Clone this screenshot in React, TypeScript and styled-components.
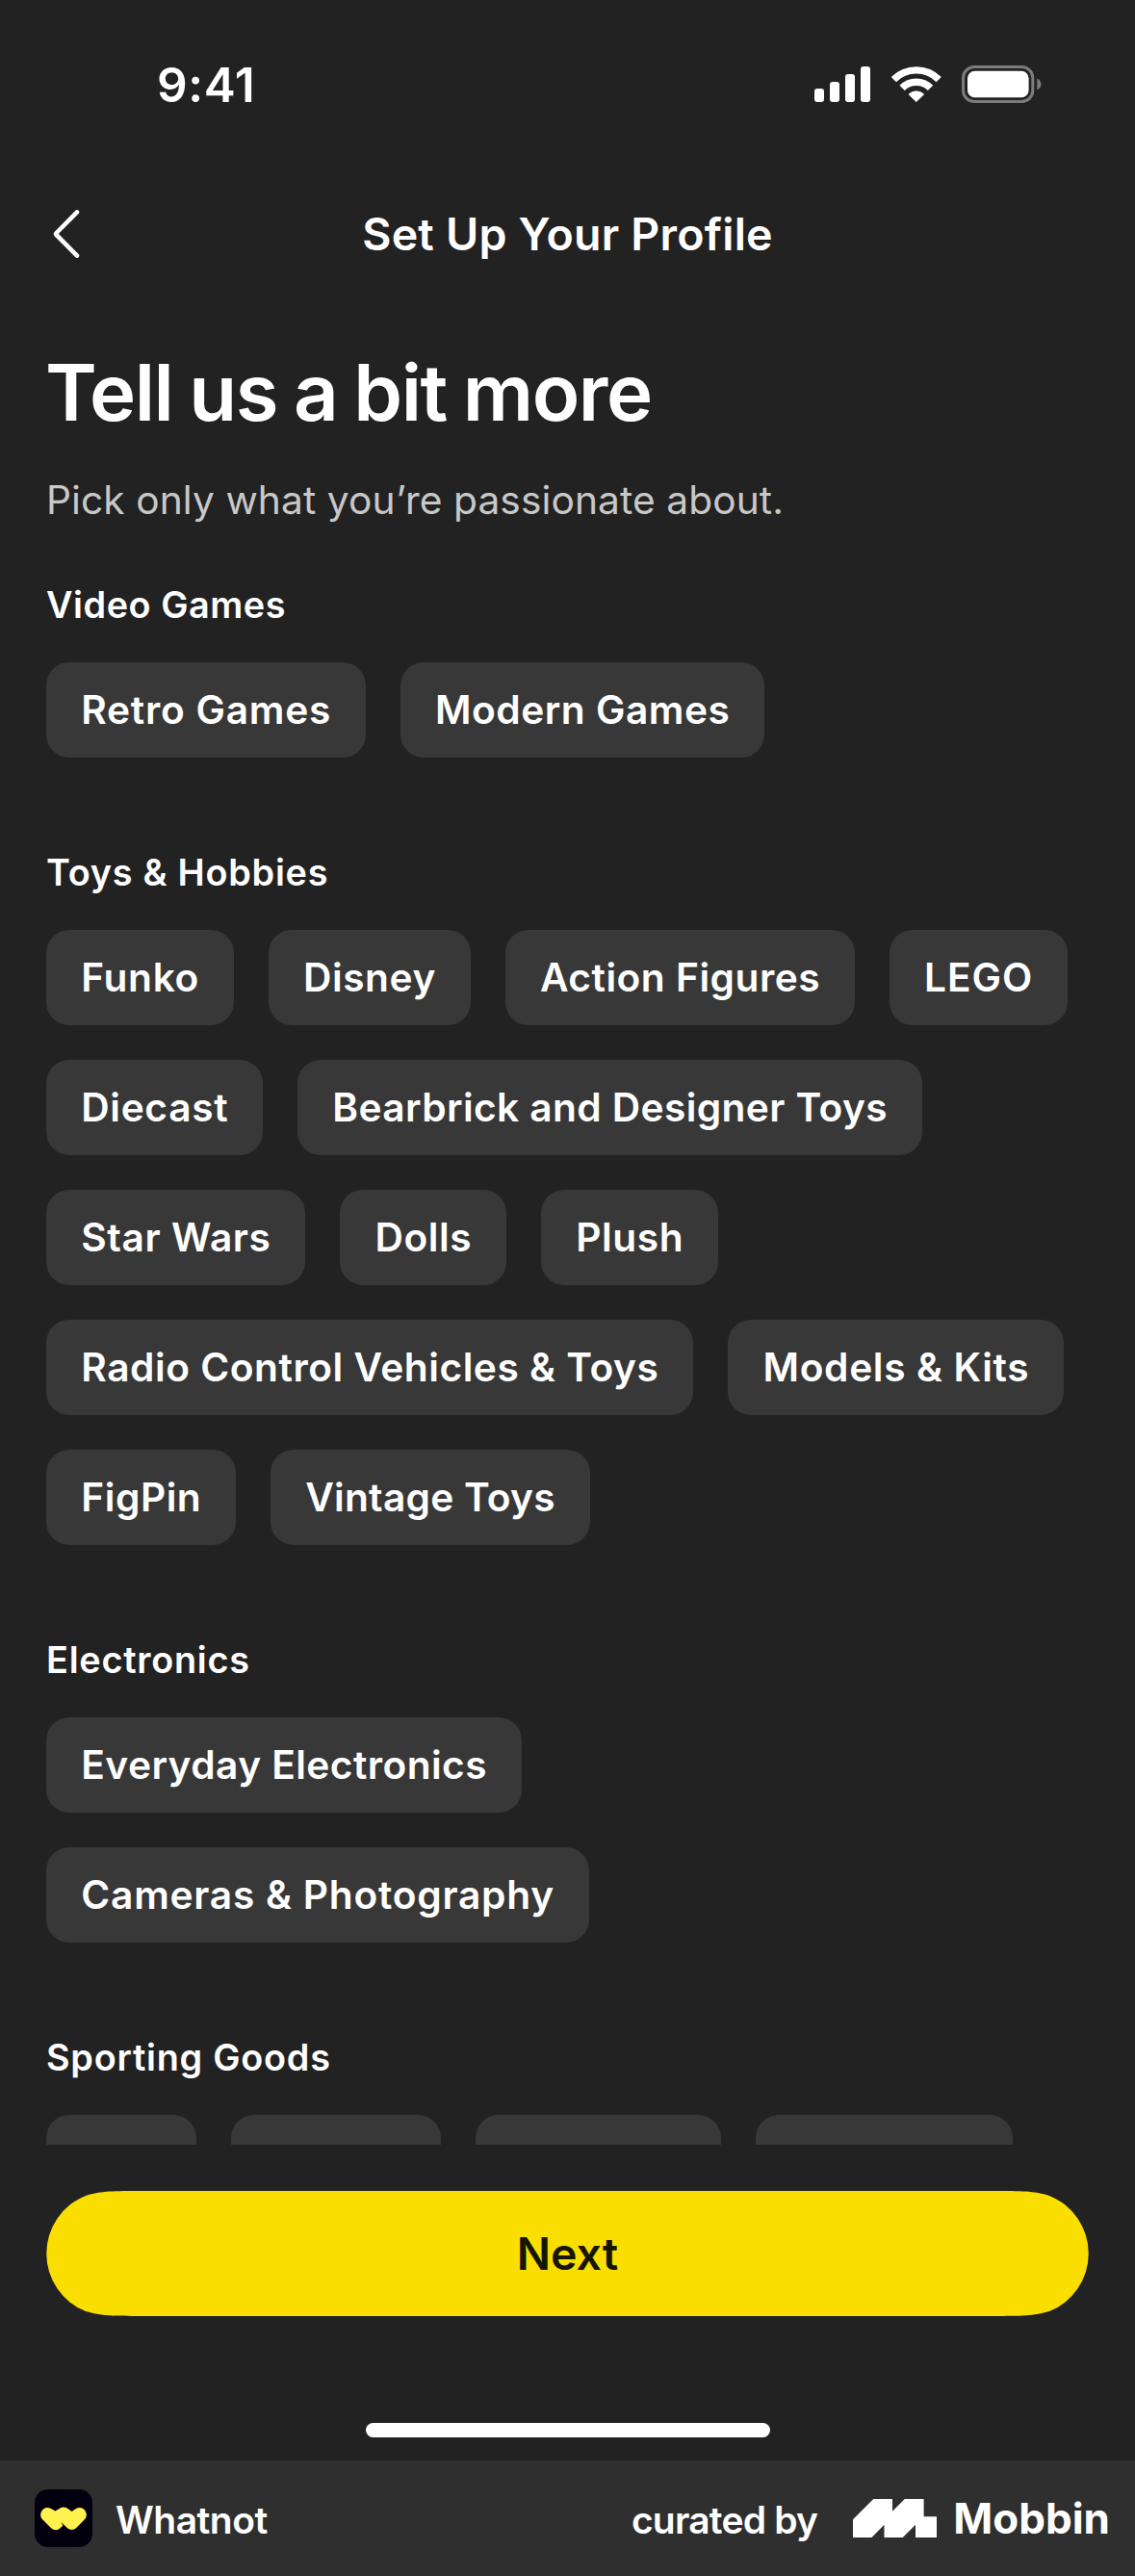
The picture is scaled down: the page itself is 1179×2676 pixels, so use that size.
import React from 'react';
import styled, { createGlobalStyle } from 'styled-components';

const GlobalStyle = createGlobalStyle`
  body {
    margin: 0;
    background: #222222;
  }
  *, *::before, *::after {
    box-sizing: border-box;
  }
`;

const Screen = styled.div`
  display: flex;
  flex-direction: column;
  width: 1179px;
  height: 2676px;
  overflow: hidden;
  background: #222222;
  color: #ffffff;
  font-family: Inter, 'Liberation Sans', sans-serif;
`;

const StatusBar = styled.header`
  display: flex;
  flex: none;
  align-items: center;
  justify-content: space-between;
  height: 177px;
  padding: 0 97px 0 163px;
`;

const Clock = styled.span`
  margin-top: -2px;
  font-size: 49.5px;
  font-weight: 600;
  line-height: 60px;
  letter-spacing: 0.6px;
`;

const StatusIcons = styled.div`
  display: flex;
  align-items: center;
  gap: 21.5px;
  margin-top: -2px;

  svg {
    display: block;
  }
`;

const NavBar = styled.nav`
  display: grid;
  flex: none;
  grid-template-columns: 132px 1fr 132px;
  align-items: center;
  height: 132px;
`;

const BackButton = styled.button`
  display: flex;
  width: 132px;
  height: 132px;
  padding: 41px 0 0 54px;
  border: 0;
  background: none;
`;

const NavTitle = styled.h1`
  margin: 0;
  font-size: 46.5px;
  font-weight: 600;
  line-height: 56px;
  letter-spacing: 0.23px;
  text-align: center;
`;

const Content = styled.main`
  flex: none;
  height: 1919px;
  padding: 48px 48px 0;
  overflow: hidden;
`;

const Heading = styled.h2`
  margin: 0;
  font-size: 81.5px;
  font-weight: 600;
  line-height: 101px;
  letter-spacing: -1.5px;
  text-indent: -1px;
  word-spacing: -2px;
`;

const Subheading = styled.p`
  margin: 36px 0 60px;
  color: #c8c8c8;
  font-size: 40.7px;
  line-height: 51px;
  letter-spacing: 0.08px;
`;

const Sections = styled.div`
  display: flex;
  flex-direction: column;
  gap: 96px;
`;

const Section = styled.section`
  display: flex;
  flex-direction: column;
  gap: 36px;
`;

const SectionTitle = styled.h3<{ $tracking: number }>`
  margin: 0;
  font-size: 37.8px;
  font-weight: 600;
  line-height: 47px;
  letter-spacing: ${(p) => p.$tracking}px;
`;

const ChipList = styled.div`
  display: flex;
  flex-wrap: wrap;
  gap: 36px;
`;

const Chip = styled.button<{ $tracking?: number; $width?: number }>`
  width: ${(p) => (p.$width ? `${p.$width}px` : 'auto')};
  height: 99px;
  padding: 0 35.7px 0 36.3px;
  border: 0;
  border-radius: 24px;
  background: #383838;
  color: #ffffff;
  font-family: inherit;
  font-size: 40.7px;
  font-weight: 600;
  line-height: 99px;
  letter-spacing: ${(p) => p.$tracking ?? 0}px;
  white-space: nowrap;
`;

const Actions = styled.div`
  display: flex;
  flex: none;
  flex-direction: column;
  align-items: center;
  justify-content: space-between;
  height: 328px;
  padding: 48px 48px 24px;
`;

const PrimaryButton = styled.button`
  width: 1083px;
  height: 130px;
  padding: 0;
  border: 0;
  background: #f9de00;
  color: #161600;
  font-family: inherit;
  font-size: 46.5px;
  font-weight: 600;
  line-height: 130px;
  clip-path: path(
    'M99 0 H984 C1012 0 1026.6 0 1042 4.9 A64.7 64.7 0 0 1 1042 125.1 C1026.6 130 1012 130 984 130 H99 C71 130 56.4 130 41 125.1 A64.7 64.7 0 0 1 41 4.9 C56.4 0 71 0 99 0 Z'
  );
`;

const HomeIndicator = styled.div`
  width: 420px;
  height: 15px;
  border-radius: 8px;
  background: #ffffff;
`;

const Footer = styled.footer`
  display: flex;
  flex: none;
  align-items: center;
  justify-content: space-between;
  height: 120px;
  padding: 0 26px 0 36px;
  background: #2f2f2f;
`;

const FooterGroup = styled.div<{ $gap: number }>`
  display: flex;
  align-items: center;
  gap: ${(p) => p.$gap}px;

  svg {
    display: block;
  }
`;

const AppIcon = styled.div`
  width: 60px;
  height: 60px;
  border-radius: 14px;
  background: #02000f;
`;

const FooterText = styled.span<{ $tracking: number }>`
  padding-top: 3px;
  font-size: 39px;
  font-weight: 600;
  line-height: 48px;
  letter-spacing: ${(p) => p.$tracking}px;
`;

const Wordmark = styled.span`
  font-size: 44px;
  font-weight: 700;
  line-height: 54px;
`;

type ChipData = { label?: string; tracking?: number; width?: number };
type SectionData = { title: string; tracking: number; chips: ChipData[] };

const sections: SectionData[] = [
  {
    title: 'Video Games',
    tracking: 0.55,
    chips: [
      { label: 'Retro Games', tracking: 0.74 },
      { label: 'Modern Games', tracking: 0.5 },
    ],
  },
  {
    title: 'Toys & Hobbies',
    tracking: 0.74,
    chips: [
      { label: 'Funko', tracking: 0.68 },
      { label: 'Disney', tracking: 0.55 },
      { label: 'Action Figures', tracking: 0.5 },
      { label: 'LEGO', tracking: 0.9 },
      { label: 'Diecast', tracking: 0.66 },
      { label: 'Bearbrick and Designer Toys', tracking: 0.39 },
      { label: 'Star Wars', tracking: 0.59 },
      { label: 'Dolls', tracking: 0.6 },
      { label: 'Plush', tracking: 0.55 },
      { label: 'Radio Control Vehicles & Toys', tracking: 0.53 },
      { label: 'Models & Kits', tracking: 0.66 },
      { label: 'FigPin', tracking: 0.53 },
      { label: 'Vintage Toys', tracking: 0.23 },
    ],
  },
  {
    title: 'Electronics',
    tracking: 0.75,
    chips: [
      { label: 'Everyday Electronics', tracking: 0.43 },
      { label: 'Cameras & Photography', tracking: 0.75 },
    ],
  },
  {
    title: 'Sporting Goods',
    tracking: 0.76,
    chips: [{ width: 156 }, { width: 218 }, { width: 255 }, { width: 267 }],
  },
];

function SignalIcon() {
  return (
    <svg width="58" height="37" viewBox="0 0 58 37" fill="#fff">
      <rect x="0" y="23" width="10" height="14" rx="3" />
      <rect x="16" y="16" width="10" height="21" rx="3" />
      <rect x="32" y="8" width="10" height="29" rx="3" />
      <rect x="48" y="0" width="10" height="37" rx="3" />
    </svg>
  );
}

function WifiIcon() {
  return (
    <svg width="52" height="38" viewBox="0 0 52 38" fill="none" stroke="#fff">
      <path d="M2.4 13.6 A33.1 33.1 0 0 1 49.2 13.6" strokeWidth="7.3" />
      <path d="M11.1 22.4 A20.7 20.7 0 0 1 40.5 22.4" strokeWidth="7.4" />
      <path
        d="M25.8 36.6 L18 28.9 A11.5 11.5 0 0 1 33.6 28.9 Z"
        fill="#fff"
        strokeWidth="1"
        strokeLinejoin="round"
      />
    </svg>
  );
}

function BatteryIcon() {
  return (
    <svg width="83" height="39" viewBox="0 0 83 39">
      <rect x="1.5" y="1.5" width="72.3" height="36" rx="11.5" fill="none" stroke="#7c7c7c" strokeWidth="3" />
      <rect x="6" y="5.8" width="63.6" height="27.5" rx="7.5" fill="#fff" />
      <path d="M78.3 13.6 C83.8 16 83.8 23 78.3 25.4 Z" fill="#7c7c7c" />
    </svg>
  );
}

function ChevronIcon() {
  return (
    <svg width="30" height="50" viewBox="0 0 30 50" fill="none">
      <path
        d="M26 2.4 L4.6 24 Q3.6 25 4.6 26 L26 47.6"
        stroke="#fff"
        strokeWidth="4.6"
        strokeLinecap="round"
        strokeLinejoin="round"
      />
    </svg>
  );
}

function WhatnotMark() {
  return (
    <svg width="60" height="60" viewBox="0 0 60 60">
      <path
        d="M7.9 31.1 A7.3 7.3 0 0 1 18.2 20.8 L21.4 22.6 L24.9 20.6 A7.5 7.5 0 0 1 35.2 20.6 L38.6 23 L41.8 20.8 A7.3 7.3 0 0 1 52.1 31.1 L43 40.3 A6.5 6.5 0 0 1 34 40.3 L27.3 33.8 L29.4 37.6 L26.6 40.3 A6.7 6.7 0 0 1 17.2 40.3 Z"
        fill="#fff24f"
      />
    </svg>
  );
}

function MobbinMark() {
  return (
    <svg width="87" height="40" viewBox="0 0 87 40">
      <path
        d="M0 21.3 L21.3 0 H41 V12.8 L53.8 0 H73.6 V18.3 H87 V40 H65 V26.7 L51.7 40 H32.5 V26.7 L19.5 40 H0 Z"
        fill="#fff"
      />
    </svg>
  );
}

export default function App() {
  return (
    <>
      <GlobalStyle />
      <Screen>
        <StatusBar>
          <Clock>9:41</Clock>
          <StatusIcons>
            <SignalIcon />
            <WifiIcon />
            <BatteryIcon />
          </StatusIcons>
        </StatusBar>
        <NavBar>
          <BackButton aria-label="Back">
            <ChevronIcon />
          </BackButton>
          <NavTitle>Set Up Your Profile</NavTitle>
        </NavBar>
        <Content>
          <Heading>Tell us a bit more</Heading>
          <Subheading>Pick only what you’re passionate about.</Subheading>
          <Sections>
            {sections.map((section) => (
              <Section key={section.title}>
                <SectionTitle $tracking={section.tracking}>{section.title}</SectionTitle>
                <ChipList>
                  {section.chips.map((chip, i) => (
                    <Chip key={i} $tracking={chip.tracking} $width={chip.width}>
                      {chip.label}
                    </Chip>
                  ))}
                </ChipList>
              </Section>
            ))}
          </Sections>
        </Content>
        <Actions>
          <PrimaryButton>Next</PrimaryButton>
          <HomeIndicator />
        </Actions>
        <Footer>
          <FooterGroup $gap={24}>
            <AppIcon>
              <WhatnotMark />
            </AppIcon>
            <FooterText $tracking={-0.5}>Whatnot</FooterText>
          </FooterGroup>
          <FooterGroup $gap={37}>
            <FooterText $tracking={-0.8}>curated by</FooterText>
            <FooterGroup $gap={17}>
              <MobbinMark />
              <Wordmark>Mobbin</Wordmark>
            </FooterGroup>
          </FooterGroup>
        </Footer>
      </Screen>
    </>
  );
}
